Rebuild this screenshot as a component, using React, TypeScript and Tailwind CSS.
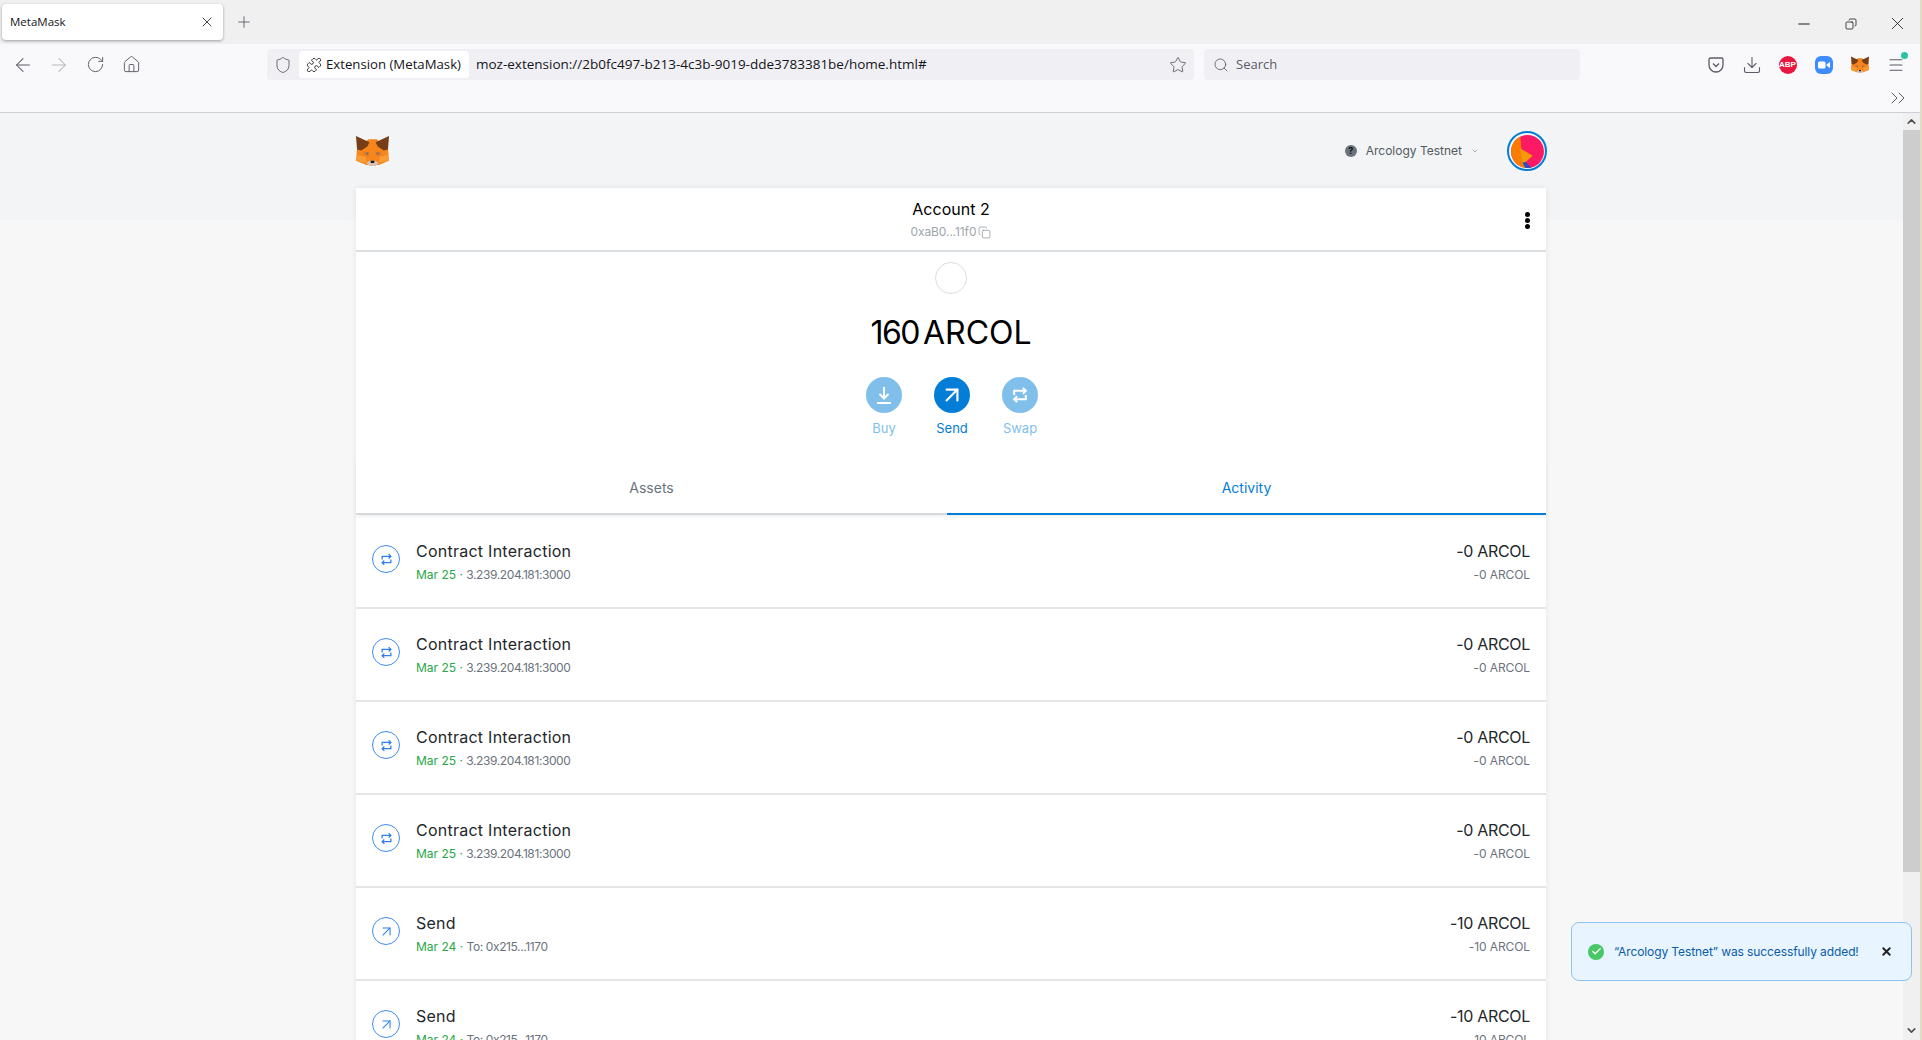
import React from "react";
import {
  ArrowLeft,
  ArrowRight,
  RotateCw,
  Home,
  Shield,
  Puzzle,
  Star,
  Search,
  Download,
  X,
  Plus,
  Minus,
  ChevronsRight,
  ChevronDown,
  ChevronUp,
  Menu,
  ArrowUpRight,
  Copy,
  Check,
} from "lucide-react";

const FONT = "font-['Inter','Lato',sans-serif]";

function Fox({ size }: { size: number }) {
  return (
    <svg width={size} height={size * 0.94} viewBox="0 0 32 30">
      <polygon points="12,4 20,4 31,13 32,25 22,29 10,29 0,25 1,13" fill="#f6851b" />
      <polygon points="0,1 13,7 11,11 5,15 1,14" fill="#763d16" />
      <polygon points="32,1 19,7 21,11 27,15 31,14" fill="#763d16" />
      <polygon points="1,19 9,21 10,27 1,25" fill="#f89c35" />
      <polygon points="31,19 23,21 22,27 31,25" fill="#f89c35" />
      <polygon points="7,16 13,17 12,20 8,19" fill="#d87c30" />
      <polygon points="25,16 19,17 20,20 24,19" fill="#d87c30" />
      <polygon points="10,17 12,17 12,19 10,19" fill="#7a6a7a" />
      <polygon points="20,17 22,17 22,19 20,19" fill="#7a6a7a" />
      <polygon points="10,27 13,25 19,25 22,27 19,30 13,30" fill="#d7c1b3" />
      <polygon points="14,25 18,25 17.5,27 14.5,27" fill="#161616" />
    </svg>
  );
}

function SwapGlyph({ size, width }: { size: number; width: number }) {
  return (
    <svg width={size} height={size} viewBox="0 0 24 24" fill="none" stroke="currentColor" strokeWidth={width}>
      <path d="M5 12V7h14" />
      <path d="M15.5 3.5L19 7l-3.5 3.5" />
      <path d="M19 12v5H5" />
      <path d="M8.5 13.5L5 17l3.5 3.5" />
    </svg>
  );
}

function Tray() {
  return (
    <div className="flex items-center gap-[7px] text-[#5b5b66]">
      <div className="w-[29px] flex justify-center">
        <svg width="18" height="18" viewBox="0 0 18 18" fill="none" stroke="#5b5b66" strokeWidth="1.3">
          <path d="M2 3.5Q2 2 3.5 2h11Q16 2 16 3.5V9A7 7 0 0 1 2 9Z" />
          <path d="M6 7.5l3 3 3-3" />
        </svg>
      </div>
      <div className="w-[29px] flex justify-center">
        <Download size={20} strokeWidth={1.3} />
      </div>
      <div className="w-[29px] flex justify-center">
        <div className="w-[18px] h-[18px] rounded-full bg-[#e8173f] text-white text-[8px] font-bold flex items-center justify-center font-['Liberation_Sans',sans-serif]">
          ABP
        </div>
      </div>
      <div className="w-[29px] flex justify-center">
        <div className="w-[18px] h-[18px] rounded-[6px] bg-[#3f8cff] flex items-center justify-center">
          <svg width="12" height="8" viewBox="0 0 12 8">
            <rect x="0" y="0.5" width="7.5" height="7" rx="1.5" fill="#fff" />
            <polygon points="8.5,3.5 12,1 12,7 8.5,4.5" fill="#fff" />
          </svg>
        </div>
      </div>
      <div className="w-[29px] flex justify-center">
        <Fox size={18} />
      </div>
      <div className="w-[29px] flex justify-center relative">
        <Menu size={18} strokeWidth={1.4} />
        <span className="absolute top-[-4px] right-[2px] w-[7px] h-[7px] rounded-full bg-[#2ac3a2]" />
      </div>
    </div>
  );
}

function NavBtn({ children }: { children: React.ReactNode }) {
  return <div className="w-[36px] flex justify-center">{children}</div>;
}

function BrowserChrome() {
  const sys = "font-['Open_Sans',sans-serif]";
  return (
    <div className={`shrink-0 ${sys}`}>
      <div className="h-[44px] bg-[#f0f0f0] flex items-start">
        <div className="ml-[2px] mt-[4px] w-[221px] h-[36px] bg-white rounded-[4px] shadow-[0_1px_3px_rgba(0,0,0,0.35)] flex items-center justify-between pl-[8px] pr-[8px] text-[11.5px] text-[#15141a]">
          <span>MetaMask</span>
          <X size={16} strokeWidth={1.2} />
        </div>
        <div className="ml-[12px] mt-[13px] text-[#5b5b66]">
          <Plus size={18} strokeWidth={1.2} />
        </div>
        <div className="ml-auto flex items-center mt-[13px] text-[#111]">
          <div className="w-[48px] flex justify-center">
            <Minus size={18} strokeWidth={1.3} />
          </div>
          <div className="w-[46px] flex justify-center">
            <Copy size={12} strokeWidth={1.5} className="-scale-x-100" />
          </div>
          <div className="w-[46px] flex justify-center">
            <X size={21} strokeWidth={0.9} />
          </div>
        </div>
      </div>
      <div className="h-[69px] bg-[#f9f9fb] border-b border-[#cfcfd8] relative">
        <div className="flex items-center h-[41px]">
          <div className="flex items-center text-[#5b5b66] pl-[5px] w-[267px]">
            <NavBtn>
              <ArrowLeft size={22} strokeWidth={1.1} />
            </NavBtn>
            <NavBtn>
              <ArrowRight size={22} strokeWidth={1.1} className="opacity-40" />
            </NavBtn>
            <NavBtn>
              <RotateCw size={19} strokeWidth={1.2} />
            </NavBtn>
            <NavBtn>
              <Home size={19} strokeWidth={1.2} />
            </NavBtn>
          </div>
          <div className="w-[927px] h-[31px] bg-[#f0f0f4] rounded-[4px] flex items-center pl-[7px] pr-[7px]">
            <Shield size={18} strokeWidth={1.2} className="text-[#5b5b66]" />
            <div className="ml-[7px] h-[27px] pl-[7px] pr-[8px] bg-white rounded-[4px] flex items-center gap-[4px] text-[13.2px] text-[#15141a]">
              <Puzzle size={16} strokeWidth={1.2} />
              Extension (MetaMask)
            </div>
            <span className="ml-[7px] text-[13.5px] text-[#15141a]">moz-extension://2b0fc497-b213-4c3b-9019-dde3783381be/home.html#</span>
            <Star size={18} strokeWidth={1.2} className="ml-auto text-[#5b5b66]" />
          </div>
          <div className="ml-[10px] w-[376px] h-[31px] bg-[#f0f0f4] rounded-[4px] flex items-center pl-[9px] gap-[7px] text-[13px] text-[#5b5b66]">
            <Search size={16} strokeWidth={1.3} />
            Search
          </div>
          <div className="ml-auto pr-[10px]">
            <Tray />
          </div>
        </div>
        <div className="absolute right-[10px] bottom-[2px] text-[#5b5b66]">
          <ChevronsRight size={24} strokeWidth={1} />
        </div>
      </div>
    </div>
  );
}

function Avatar() {
  return (
    <div className="w-[40px] h-[40px] rounded-full border-2 border-[#037dd6] p-[1.5px]">
      <svg viewBox="0 0 32 32" className="w-full h-full rounded-full block">
        <rect width="32" height="32" fill="#fb1a63" />
        <polygon points="0,0 9,0 11,26 18,32 0,32" fill="#f97c05" />
        <polygon points="9,13 21,20 11,29" fill="#f49a06" />
        <polygon points="11,27 14,26 20,32 14,32" fill="#2550c8" />
      </svg>
    </div>
  );
}

function TxIcon({ kind }: { kind: "swap" | "send" }) {
  return (
    <div className="w-[28px] h-[28px] rounded-full border border-[#3f8cf0] flex items-center justify-center text-[#2f7fe8]">
      {kind === "swap" ? <SwapGlyph size={15} width={2} /> : <ArrowUpRight size={17} strokeWidth={1.5} />}
    </div>
  );
}

type Tx = { title: string; date: string; sub: string; amount: string; kind: "swap" | "send" };

const txs: Tx[] = [
  { title: "Contract Interaction", date: "Mar 25", sub: "3.239.204.181:3000", amount: "-0 ARCOL", kind: "swap" },
  { title: "Contract Interaction", date: "Mar 25", sub: "3.239.204.181:3000", amount: "-0 ARCOL", kind: "swap" },
  { title: "Contract Interaction", date: "Mar 25", sub: "3.239.204.181:3000", amount: "-0 ARCOL", kind: "swap" },
  { title: "Contract Interaction", date: "Mar 25", sub: "3.239.204.181:3000", amount: "-0 ARCOL", kind: "swap" },
  { title: "Send", date: "Mar 24", sub: "To: 0x215...1170", amount: "-10 ARCOL", kind: "send" },
  { title: "Send", date: "Mar 24", sub: "To: 0x215...1170", amount: "-10 ARCOL", kind: "send" },
];

function TxRow({ tx }: { tx: Tx }) {
  return (
    <div className="h-[93px] shrink-0 border-b-2 border-[#e5e5e5] flex pl-[16px] pr-[16px] pt-[25px]">
      <div className="w-[44px] pt-[4px]">
        <TxIcon kind={tx.kind} />
      </div>
      <div className="flex-1">
        <div className="text-[16px] leading-[20px] text-[#24272a] tracking-[0.25px]">{tx.title}</div>
        <div className="mt-[6px] text-[12px] leading-[16px] text-[#6a737d]">
          <span className="text-[#28a745]">{tx.date}</span>
          <span className="text-[#28a745]"> · </span>
          <span className="tracking-[-0.4px]">{tx.sub}</span>
        </div>
      </div>
      <div className="text-right">
        <div className="text-[16px] leading-[20px] text-[#24272a] tracking-[-0.3px]">{tx.amount}</div>
        <div className="mt-[6px] text-[12px] leading-[16px] text-[#6a737d] tracking-[-0.1px]">{tx.amount}</div>
      </div>
    </div>
  );
}

function ActionBtn({ label, active, children }: { label: string; active?: boolean; children: React.ReactNode }) {
  return (
    <div className="w-[68px] flex flex-col items-center">
      <div className={`w-[36px] h-[36px] rounded-full flex items-center justify-center text-white ${active ? "bg-[#037dd6]" : "bg-[#81bfeb]"}`}>
        {children}
      </div>
      <div className={`mt-[6px] text-[13px] leading-[18px] ${active ? "text-[#037dd6]" : "text-[#81bfeb]"}`}>{label}</div>
    </div>
  );
}

function Wallet() {
  return (
    <div className="flex-1 bg-[#f7f7f7] overflow-hidden min-w-0">
      <div className="h-[107px] bg-[#f2f4f6]">
        <div className="w-[1190px] ml-[356px] h-[76px] flex items-center justify-between">
          <Fox size={33} />
          <div className="flex items-center mr-[-1px]">
            <div className="w-[12px] h-[12px] rounded-full bg-[#6a737d] text-[9px] font-bold text-[#111] flex items-center justify-center">?</div>
            <span className="ml-[9px] text-[12px] text-[#535a61]">Arcology Testnet</span>
            <ChevronDown size={8} className="ml-[9px] text-[#8a8f94]" />
            <div className="ml-[28px]">
              <Avatar />
            </div>
          </div>
        </div>
      </div>
      <div className="w-[1190px] ml-[356px] mt-[-32px] bg-white shadow-[0_0_6px_rgba(0,0,0,0.08)] relative">
        <div className="h-[64px] border-b-2 border-[#dcdfe2] relative flex flex-col items-center pt-[10px]">
          <div className="text-[16px] leading-[22px] text-black">Account 2</div>
          <div className="flex items-center gap-[2px] text-[12px] leading-[16px] text-[#a0a5aa] mt-[4px] tracking-[-0.1px]">
            0xaB0...11f0
            <Copy size={13} strokeWidth={1.3} className="text-[#8a8f94]" />
          </div>
          <div className="absolute right-[16px] top-[24px] flex flex-col gap-[1px]">
            <span className="w-[5px] h-[5px] bg-black rounded-full" />
            <span className="w-[5px] h-[5px] bg-black rounded-full" />
            <span className="w-[5px] h-[5px] bg-black rounded-full" />
          </div>
        </div>
        <div className="flex flex-col items-center pt-[10px]">
          <div className="w-[32px] h-[32px] rounded-full border border-[#dedede]" />
          <div className="mt-[19px] text-[32px] leading-[40px] text-black [word-spacing:-5px]">
            <span className="tracking-[-1.5px]">160</span> ARCOL
          </div>
          <div className="mt-[24px] ml-[2px] flex">
            <ActionBtn label="Buy">
              <svg width="20" height="20" viewBox="0 0 20 20" fill="none" stroke="currentColor" strokeWidth="2">
                <path d="M10 2v11" />
                <path d="M5.5 9l4.5 4.5L14.5 9" />
                <path d="M3 18h14" />
              </svg>
            </ActionBtn>
            <ActionBtn label="Send" active>
              <ArrowUpRight size={26} strokeWidth={2} />
            </ActionBtn>
            <ActionBtn label="Swap">
              <SwapGlyph size={20} width={2.4} />
            </ActionBtn>
          </div>
        </div>
        <div className="mt-[24px] flex h-[54px] text-[14px] shadow-[0_2px_3px_rgba(0,0,0,0.06)]">
          <div className="w-[591px] flex items-center justify-center text-[#6a737d] border-b-2 border-[#d6d9dc]">Assets</div>
          <div className="w-[599px] flex items-center justify-center text-[#037dd6] border-b-2 border-[#037dd6]">Activity</div>
        </div>
        <div className="flex flex-col pt-[1px]">
          {txs.map((tx, i) => (
            <TxRow key={i} tx={tx} />
          ))}
        </div>
      </div>
    </div>
  );
}

export default function App() {
  return (
    <div className={`relative h-[1040px] w-[1922px] overflow-hidden flex ${FONT}`}>
      <div className="w-[1920px] h-full flex flex-col">
        <BrowserChrome />
        <div className="flex flex-1 min-h-0">
          <Wallet />
          <div className="w-[17px] shrink-0 bg-[#f0f0f0] flex flex-col items-center text-[#505050]">
            <div className="h-[17px] flex items-center">
              <ChevronUp size={13} strokeWidth={3} />
            </div>
            <div className="w-full h-[742px] bg-[#cdcdcd]" />
            <ChevronDown size={13} strokeWidth={3} className="mt-auto mb-[3px]" />
          </div>
        </div>
      </div>
      <div className="w-[2px] h-full bg-[#e3dcc4]" />
      <div className="absolute left-[1571px] top-[922px] w-[341px] h-[59px] bg-[#e8f4ff] border border-[#8cc4f0] rounded-[8px] flex items-center pl-[16px] pr-[18px] text-[12px] text-[#0a5ca8]">
        <span className="w-[16px] h-[16px] rounded-full bg-[#48c765] flex items-center justify-center">
          <Check size={11} strokeWidth={3} className="text-white" />
        </span>
        <span className="ml-[10px] tracking-[-0.1px]">“Arcology Testnet” was successfully added!</span>
        <X size={13} strokeWidth={3.5} className="ml-auto text-[#222]" />
      </div>
    </div>
  );
}
